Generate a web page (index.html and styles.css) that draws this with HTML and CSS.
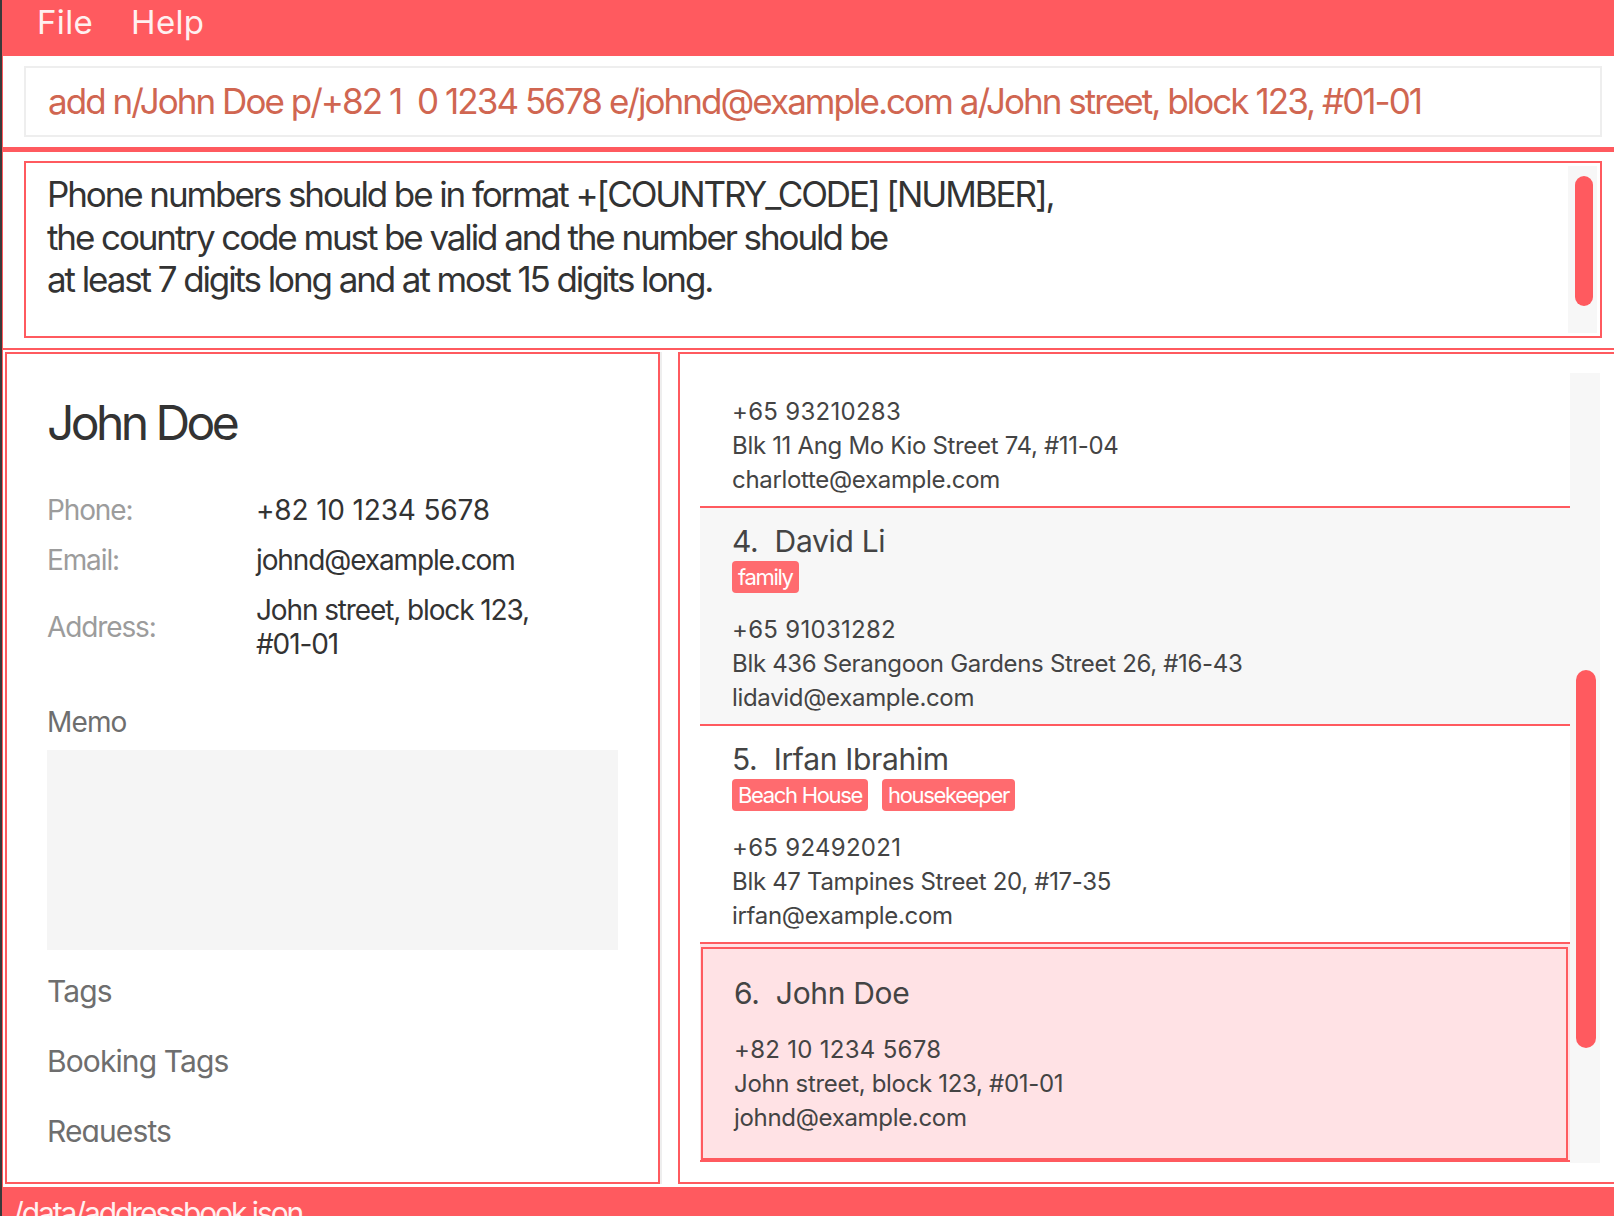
FILE: index.html
```html
<!DOCTYPE html>
<html>
<head>
<meta charset="utf-8">
<title>Address Book</title>
<link rel="stylesheet" href="styles.css">
</head>
<body>
<div class="window">
  <div class="menubar">
    <span class="menu-item">File</span>
    <span class="menu-item">Help</span>
  </div>
  <div class="content">
    <div class="command-area">
      <div class="command-box">
        <span class="command-text">add n/John Doe p/+82 1  0 1234 5678 e/johnd@example.com a/John street, block 123, #01-01</span>
      </div>
    </div>
    <div class="result-area">
      <div class="result-box">
        <div class="result-text">Phone numbers should be in format +[COUNTRY_CODE] [NUMBER],<br>the country code must be valid and the number should be<br>at least 7 digits long and at most 15 digits long.</div>
        <div class="result-track"><div class="result-thumb"></div></div>
      </div>
    </div>
    <div class="panels">
      <div class="detail-panel">
        <div class="detail-scroll">
          <div class="detail-name">John Doe</div>
          <div class="detail-grid">
            <div class="label">Phone:</div><div class="value phone">+82 10 1234 5678</div>
            <div class="label">Email:</div><div class="value">johnd@example.com</div>
            <div class="label">Address:</div><div class="value">John street, block 123, #01-01</div>
          </div>
          <div class="memo-title">Memo</div>
          <div class="memo-box"></div>
          <div class="section-title first">Tags</div>
          <div class="section-title">Booking Tags</div>
          <div class="section-title">Requests</div>
        </div>
      </div>
      <div class="divider"></div>
      <div class="list-panel">
        <div class="list-viewport">
          <div class="cells">
            <div class="cell partial">
              <div class="info"><span class="phone">+65 93210283</span><br>Blk 11 Ang Mo Kio Street 74, #11-04<br>charlotte@example.com</div>
            </div>
            <div class="cell alt">
              <div class="name">4.  David Li</div>
              <div class="tags"><span class="tag">family</span></div>
              <div class="info"><span class="phone">+65 91031282</span><br>Blk 436 Serangoon Gardens Street 26, #16-43<br>lidavid@example.com</div>
            </div>
            <div class="cell">
              <div class="name">5.  Irfan Ibrahim</div>
              <div class="tags"><span class="tag">Beach House</span><span class="tag">housekeeper</span></div>
              <div class="info"><span class="phone">+65 92492021</span><br>Blk 47 Tampines Street 20, #17-35<br>irfan@example.com</div>
            </div>
            <div class="cell selected">
              <div class="sel-inner">
                <div class="name">6.  John Doe</div>
                <div class="info"><span class="phone">+82 10 1234 5678</span><br>John street, block 123, #01-01<br>johnd@example.com</div>
              </div>
            </div>
          </div>
          <div class="list-track"><div class="list-thumb"></div></div>
        </div>
      </div>
    </div>
    <div class="statusbar">/data/addressbook.json</div>
  </div>
</div>
</body>
</html>
```

FILE: styles.css
```css
* { box-sizing: border-box; }
html, body { margin: 0; padding: 0; }
body {
  width: 1614px;
  height: 1216px;
  overflow: hidden;
  background: #ffffff;
  font-family: Inter, "Noto Sans", sans-serif;
  letter-spacing: -0.02em;
}
.window {
  width: 1614px;
  height: 1216px;
  border-left: 2px solid #3a3a3a;
  display: flex;
  flex-direction: column;
}
.menubar {
  height: 56px;
  flex-shrink: 0;
  background: #ff5a5f;
  display: flex;
  align-items: flex-start;
  padding: 3px 0 0 35px;
}
.menu-item {
  font-size: 33px;
  line-height: 38px;
  letter-spacing: 0.01em;
  color: #fff0f0;
  margin-right: 38px;
}
.content {
  flex: 1;
  min-height: 0;
  border-left: 1px solid #ff5a5f;
  display: flex;
  flex-direction: column;
}
.command-area {
  height: 96px;
  flex-shrink: 0;
  border-bottom: 5px solid #ff5a5f;
  padding: 10px 12px 0 21px;
}
.command-box {
  height: 71px;
  border: 2px solid #eeeeee;
  display: flex;
  align-items: center;
  padding: 0 20px 1px 22px;
}
.command-text {
  font-size: 35px;
  letter-spacing: -0.056em;
  color: #d06651;
  white-space: pre;
}
.result-area {
  height: 198px;
  flex-shrink: 0;
  border-bottom: 2px solid #ff5a5f;
  padding: 9px 12px 0 21px;
}
.result-box {
  height: 177px;
  border: 2px solid #ff5a5f;
  display: flex;
}
.result-text {
  flex: 1;
  padding: 10px 0 0 21px;
  font-size: 35px;
  line-height: 42.5px;
  letter-spacing: -0.06em;
  color: #333333;
}
.result-track {
  width: 29px;
  margin: 3px 3px 3px 0;
  background: #f7f7f7;
  padding: 10px 4px 0 7px;
}
.result-thumb {
  width: 18px;
  height: 130px;
  border-radius: 9px;
  background: #ff5a5f;
}
.panels {
  display: flex;
  margin-top: 2px;
  height: 832px;
  flex-shrink: 0;
  padding-left: 2px;
}
.detail-panel {
  width: 655px;
  flex-shrink: 0;
  border: 2px solid #ff5a5f;
  padding: 0 40px 40px 40px;
}
.detail-scroll {
  height: 788px;
  overflow: hidden;
  padding-top: 40px;
}
.detail-name {
  font-size: 48px;
  line-height: 58px;
  letter-spacing: -0.075em;
  color: #333333;
}
.detail-grid {
  margin-top: 41px;
  display: grid;
  grid-template-columns: 209px 300px;
  row-gap: 16px;
  align-items: center;
  font-size: 28px;
  line-height: 34px;
  letter-spacing: -0.04em;
}
.label { color: #9c9c9c; }
.value { color: #333333; }
.value.phone { letter-spacing: -0.006em; }
.memo-title {
  margin-top: 44px;
  font-size: 28px;
  line-height: 34px;
  letter-spacing: -0.03em;
  color: #6e6e6e;
}
.memo-box {
  margin-top: 11px;
  height: 200px;
  background: #f5f5f5;
}
.section-title {
  margin-top: 34px;
  font-size: 30px;
  line-height: 36px;
  letter-spacing: -0.03em;
  color: #6e6e6e;
}
.section-title.first { margin-top: 23px; }
.divider {
  width: 2px;
  flex-shrink: 0;
  background: #eeeeee;
}
.list-panel {
  margin-left: 16px;
  width: 944px;
  flex-shrink: 0;
  border: 2px solid #ff5a5f;
  padding: 19px 20px;
}
.list-viewport {
  height: 790px;
  display: flex;
  overflow: hidden;
}
.cells {
  width: 870px;
  flex-shrink: 0;
}
.cell {
  height: 218px;
  border-bottom: 2px solid #ff5a5f;
  padding: 5px 0 0 32px;
  display: flex;
  flex-direction: column;
  justify-content: center;
  background: #ffffff;
  color: #444444;
}
.cell.partial {
  height: 135px;
  justify-content: flex-end;
  padding: 0 0 9px 32px;
}
.cell.alt { background: #f7f7f7; }
.cell.selected {
  background: #ffe2e5;
  padding: 3px 2px 0 1px;
}
.sel-inner {
  flex: 1;
  border: 2px solid #ff5a5f;
  padding: 2px 0 0 31px;
  display: flex;
  flex-direction: column;
  justify-content: center;
}
.name {
  font-size: 30px;
  line-height: 39px;
  white-space: pre;
}
.tags {
  display: flex;
  gap: 14px;
  height: 32px;
}
.tag {
  background: #ff6b6f;
  color: #ffffff;
  font-size: 22px;
  line-height: 32px;
  letter-spacing: -0.06em;
  padding: 0 6px;
  border-radius: 4px;
}
.info {
  margin-top: 20px;
  font-size: 24px;
  line-height: 34px;
}
.info .phone { letter-spacing: 0.012em; }
.list-track {
  width: 30px;
  flex-shrink: 0;
  background: #f7f7f7;
  padding: 297px 4px 0 6px;
}
.list-thumb {
  width: 20px;
  height: 378px;
  border-radius: 10px;
  background: #ff5a5f;
}
.statusbar {
  margin-top: 3px;
  height: 40px;
  flex-shrink: 0;
  background: #ff5a5f;
  padding: 8px 0 0 10px;
  font-size: 30px;
  line-height: 36px;
  letter-spacing: -0.07em;
  color: #fff0f0;
}
```
